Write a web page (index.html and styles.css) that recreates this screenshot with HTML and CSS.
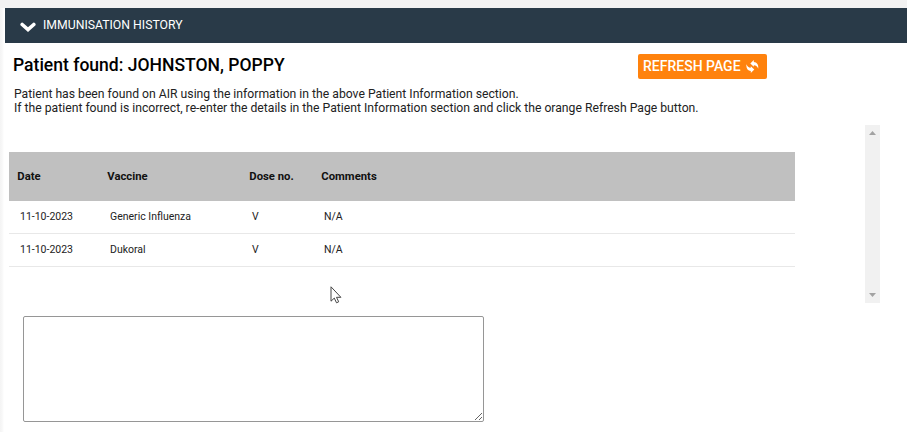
FILE: index.html
```html
<!DOCTYPE html>
<html lang="en">
<head>
<meta charset="utf-8">
<title>Immunisation History</title>
<link rel="stylesheet" href="styles.css">
</head>
<body>
<main class="panel">
  <header class="panel-header">
    <svg class="chevron" width="16" height="11" viewBox="0 0 16 11"><path d="M2.200 2.500 8 7.700l5.800-5.200" fill="none" stroke="#fff" stroke-width="3.600" stroke-linecap="round"/></svg>
    <span class="panel-title">IMMUNISATION HISTORY</span>
  </header>
  <div class="patient-row">
    <h1 class="patient"><span>Patient found: JOHNSTON, POPPY</span></h1>
    <button class="refresh"><span>REFRESH PAGE</span>
      <svg width="13" height="13" viewBox="0 0 13 13" fill="#fff"><path d="M4.300 3.400 7.800 0v2c3.200.2 5 2.800 4.400 6.800C11.400 6.600 10.200 5.400 7.800 5.300v1.500z"/><path d="M8.300 9.600 4.800 13v-2C1.600 10.800-.1 8.200.5 4.200c.8 2.200 2 3.400 4.300 3.500V6.200z"/></svg>
    </button>
  </div>
  <p class="message"><span class="line first">Patient has been found on AIR using the information in the above Patient Information section.</span><span class="line second">If the patient found is incorrect, re-enter the details in the Patient Information section and click the orange Refresh Page button.</span></p>
  <section class="history">
    <table class="vaccines">
      <colgroup><col class="c-date"><col class="c-vaccine"><col class="c-dose"><col></colgroup>
      <thead><tr><th>Date</th><th>Vaccine</th><th>Dose no.</th><th>Comments</th></tr></thead>
      <tbody>
        <tr><td>11-10-2023</td><td>Generic Influenza</td><td>V</td><td>N/A</td></tr>
        <tr><td>11-10-2023</td><td>Dukoral</td><td>V</td><td>N/A</td></tr>
      </tbody>
    </table>
    <div class="scrollbar">
      <svg width="7" height="4" viewBox="0 0 7 4"><path d="M3.500 0 7 4H0z" fill="#a3a3a3"/></svg>
      <svg width="7" height="4" viewBox="0 0 7 4"><path d="M0 0h7L3.500 4z" fill="#a3a3a3"/></svg>
    </div>
  </section>
  <textarea class="notes" aria-label="Notes"></textarea>
</main>
<svg class="cursor" width="12" height="18" viewBox="0 0 12 18"><path d="M1 .8v14.400l3.300-3.100 2.200 4.700 2.200-1-2.200-4.500h4.400z" fill="#fff" stroke="#444" stroke-width="1"/></svg>
</body>
</html>
```
FILE: styles.css
```css
* { box-sizing: border-box; }
body {
  margin: 0;
  height: 432px;
  overflow: hidden;
  background: linear-gradient(90deg, #f4f4f4 0, #f7f7f7 2px, #fff 4px);
  font-family: Roboto, "Liberation Sans", sans-serif;
  color: #222;
}
.panel { border-top: 8px solid #f2f2f2; height: 432px; }
.panel-header {
  display: flex;
  align-items: center;
  height: 35px;
  margin-left: 5px;
  padding-left: 15px;
  background: #293a48;
  color: #fff;
}
.chevron { margin-top: 3px; }
.panel-title { margin-left: 7px; margin-top: -2px; font-size: 12.250px; }
.patient-row {
  display: flex;
  align-items: center;
  height: 46px;
  padding-left: 13px;
}
.patient { width: 625px; margin: -3px 0 0; font-size: 17.550px; font-weight: 500; color: #000; }
.refresh {
  display: flex;
  align-items: center;
  gap: 5px;
  width: 129px;
  height: 25px;
  padding: 0 5px;
  border: 0;
  border-radius: 2px;
  background: #ff820d;
  color: #fff;
  font: 500 14px Roboto, sans-serif;
  white-space: nowrap;
}
.message { margin: -2px 0 0 14px; font-size: 12.200px; line-height: 14px; }
.line { display: block; white-space: nowrap; }
.history { display: flex; justify-content: space-between; height: 178px; margin: 10px 27px 0 9px; }
.vaccines {
  align-self: flex-start;
  width: 786px;
  margin-top: 27px;
  border-collapse: collapse;
  table-layout: fixed;
}
.c-date { width: 90px; }
.c-vaccine { width: 142px; }
.c-dose { width: 72px; }
th { height: 49px; padding: 0 0 0 8.300px; background: #c0c0c0; text-align: left; font-size: 11.300px; font-weight: 700; color: #111; }
td { height: 33px; padding: 0 0 0 11px; border-bottom: 1px solid #e8e8e8; font-size: 10.500px; }
tbody tr:first-child td { height: 32px; padding-bottom: 1px; }
.scrollbar {
  display: flex;
  flex-direction: column;
  justify-content: space-between;
  align-items: center;
  width: 15px;
  padding: 6px 0;
  background: #f1f1f1;
}
.notes {
  display: block;
  width: 461px;
  height: 106px;
  margin: 13px 0 0 23px;
  border: 1px solid #969696;
  border-radius: 2px;
  background: #fff;
}
.cursor { position: absolute; left: 330px; top: 286px; }
```
